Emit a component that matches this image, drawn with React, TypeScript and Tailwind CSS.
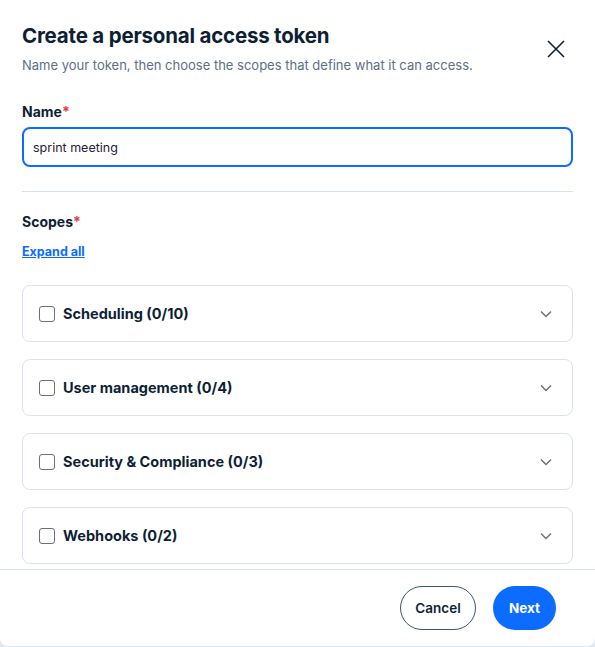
import React, { useState } from 'react';

const SCOPES = [
  { name: 'Scheduling', total: 10 },
  { name: 'User management', total: 4 },
  { name: 'Security & Compliance', total: 3 },
  { name: 'Webhooks', total: 2 },
];

const App: React.FC = () => {
  const [name, setName] = useState('sprint meeting');

  return (
    <div className="h-[647px] w-[595px] bg-[#dfe8f1] font-['Inter',sans-serif]">
      <div className="flex h-[646px] flex-col rounded-b-lg bg-white">
        <div className="flex items-start justify-between pl-[22px] pr-[29px] pt-[23px]">
          <div>
            <h1 className="text-[20.5px] font-bold leading-[26px] tracking-[-0.2px] text-[#0e1f35]">Create a personal access token</h1>
            <p className="mt-[8px] text-[13px] leading-[16px] text-[#5d6f86]">
              Name your token, then choose the scopes that define what it can access.
            </p>
          </div>
          <button className="mt-[16px] text-[#0e1f35]" aria-label="Close">
            <svg width="20" height="20" viewBox="0 0 20 20" fill="none" stroke="currentColor" strokeWidth="1.6">
              <path d="M2 2L18 18M18 2L2 18" />
            </svg>
          </button>
        </div>

        <div className="px-[22px] pt-[30px]">
          <label className="block text-[14px] font-bold leading-[18px] text-[#0e1f35]">
            Name<span className="text-[#e8363c]">*</span>
          </label>
          <input
            value={name}
            onChange={(e) => setName(e.target.value)}
            className="mt-[6px] h-[40px] w-full rounded-lg border-2 border-[#0b6cff] px-[9px] text-[12.5px] text-[#232333] outline-none"
          />
          <div className="mt-[24px] h-px bg-[#d6e2ee]" />

          <div className="mt-[21px] text-[14px] font-bold leading-[18px] text-[#0e1f35]">
            Scopes<span className="text-[#e8363c]">*</span>
          </div>
          <button className="mt-[13px] text-[12.5px] font-bold leading-[16px] text-[#0b6cff] underline">Expand all</button>

          <div className="mt-[23px] flex flex-col gap-[17px]">
            {SCOPES.map((s) => (
              <div
                key={s.name}
                className="flex h-[57px] items-center justify-between rounded-lg border border-[#dae3ed] pl-[16px] pr-[19px]"
              >
                <label className="flex items-center gap-[8px]">
                  <span className="h-[16px] w-[16px] rounded-[3px] border border-[#6e7074] bg-white" />
                  <span className="text-[14.5px] font-bold text-[#0e1f35]">
                    {s.name} (0/{s.total})
                  </span>
                </label>
                <svg width="14" height="14" viewBox="0 0 14 14" fill="none" stroke="#6e7074" strokeWidth="1.5">
                  <path d="M2 4.5L7 9.5L12 4.5" />
                </svg>
              </div>
            ))}
          </div>
        </div>

        <div className="mt-[5px] flex flex-1 items-center justify-end gap-[17px] border-t border-[#d6e2ee] pr-[39px]">
          <button className="h-[44px] w-[76px] rounded-full border border-[#3d5575] text-[13.5px] font-semibold text-[#0e1f35]">
            Cancel
          </button>
          <button className="h-[44px] w-[63px] rounded-full bg-[#0b6cff] text-[13.5px] font-bold text-white">Next</button>
        </div>
      </div>
    </div>
  );
};

export default App;
